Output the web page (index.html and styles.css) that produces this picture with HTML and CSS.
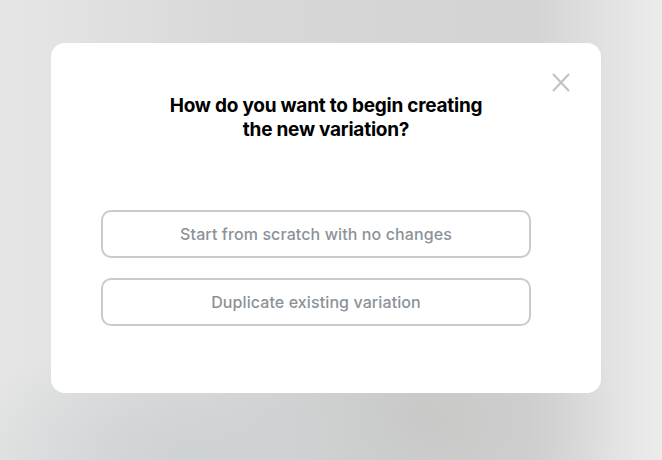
FILE: index.html
```html
<!DOCTYPE html>
<html lang="en">
<head>
    <meta charset="UTF-8">
    <meta name="viewport" content="width=device-width, initial-scale=1.0">
    <title>New variation</title>
    <link rel="stylesheet" href="styles.css">
</head>
<body>
    <div class="backdrop">
        <div class="modal">
            <button class="close" aria-label="Close">
                <svg width="18" height="19" viewBox="0 0 18 19">
                    <path d="M1 1 L17 18 M17 1 L1 18" stroke="#bfc1c3" stroke-width="2" fill="none"/>
                </svg>
            </button>
            <h2 class="title">How do you want to begin creating<br>the new variation?</h2>
            <div class="options">
                <button class="option">Start from scratch with no changes</button>
                <button class="option">Duplicate existing variation</button>
            </div>
        </div>
    </div>
</body>
</html>
```

FILE: styles.css
```css
html, body {
    margin: 0;
    height: 100%;
}
body {
    font-family: Inter, "Noto Sans", sans-serif;
    background-color: #d8d8d8;
    background-image:
        radial-gradient(ellipse 260px 110px at 190px 450px, rgba(204, 209, 211, 0.9), transparent),
        radial-gradient(ellipse 200px 150px at 420px 420px, rgba(198, 198, 197, 0.9), transparent),
        linear-gradient(90deg, #e6e6e6 0%, #d8d8d8 35%, #d3d3d3 80%, #ececec 100%);
}
.backdrop {
    padding: 43px 0 0 51px;
}
.modal {
    position: relative;
    width: 550px;
    height: 350px;
    box-sizing: border-box;
    background: #fff;
    border-radius: 14px;
    padding: 51px 70px 0 50px;
}
.close {
    position: absolute;
    top: 30px;
    right: 31px;
    padding: 0;
    border: none;
    background: none;
    width: 18px;
    height: 19px;
    cursor: pointer;
}
.close svg {
    display: block;
}
.title {
    margin: 0 -20px 0 0;
    text-align: center;
    font-size: 19px;
    line-height: 24px;
    font-weight: 700;
    letter-spacing: -0.24px;
    color: #000;
}
.options {
    display: flex;
    flex-direction: column;
    gap: 20px;
    margin-top: 68px;
}
.option {
    height: 48px;
    border: 2px solid #cacbcc;
    border-radius: 10px;
    background: #fff;
    font-family: inherit;
    font-size: 16px;
    font-weight: 500;
    letter-spacing: 0.1px;
    color: #8b9299;
    cursor: pointer;
}
```
